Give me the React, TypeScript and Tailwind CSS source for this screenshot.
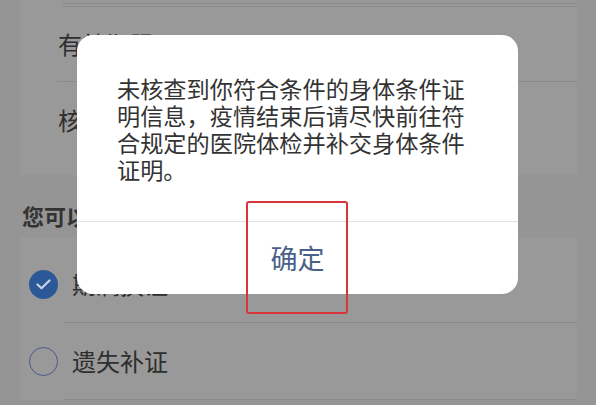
import React from "react";

const font = { fontFamily: '"Noto Sans CJK SC", "Noto Sans", sans-serif' };

function Row({ children, h, pt = 0 }: { children: React.ReactNode; h: string; pt?: number }) {
    return <div className={`flex items-center ${h}`} style={pt ? { paddingTop: pt } : undefined}>{children}</div>;
}

export default function App() {
    return (
        <div className="relative w-[596px] h-[405px] overflow-hidden bg-[#959595]" style={font}>
            {/* top card: licence details */}
            <div className="ml-[20px] mr-[19px] h-[175px] bg-[#999999]">
                <div className="pt-[3px] pl-[43px]">
                    <div className="h-px bg-[#8a8a8a]" />
                    <div className="mt-[2px] h-px bg-[#8c8c8c]" />
                </div>
                <Row h="h-[74px]">
                    <span className="pl-[38px] text-[24px] leading-[28px] text-[#2e2e2e]">有效期限</span>
                </Row>
                <div className="ml-[37px] h-px bg-[#8b8b8b]" />
                <Row h="h-[76px]">
                    <span className="pl-[38px] text-[24px] leading-[28px] text-[#2e2e2e]">核发机关</span>
                </Row>
            </div>

            {/* section header */}
            <div className="h-[62px] pl-[22px] pt-[28px]">
                <span className="block text-[22px] leading-[24px] font-semibold text-[#333333]">您可以办理以下业务</span>
            </div>

            {/* options */}
            <div className="ml-[20px] mr-[19px] bg-[#999999]">
                <div className="flex items-center h-[85px] pt-[9px]">
                    <span className="ml-[9px] flex h-[29px] w-[29px] items-center justify-center rounded-full bg-[#2d5898]">
                        <svg width="15" height="11" viewBox="0 0 15 11" fill="none">
                            <path d="M1.5 5.5 L5.5 9.2 L13.5 1.5" stroke="#c9d3e2" strokeWidth="2.2" strokeLinecap="round" strokeLinejoin="round" />
                        </svg>
                    </span>
                    <span className="ml-[14px] text-[24px] leading-[28px] text-[#2e2e2e]">期满换证</span>
                </div>
                <div className="ml-[43px] h-px bg-[#8b8b8b]" />
                <div className="flex items-center h-[76px]">
                    <span className="ml-[9px] h-[29px] w-[29px] rounded-full border-[1.5px] border-[#4c5a87]" />
                    <span className="ml-[14px] text-[24px] leading-[28px] text-[#2e2e2e]">遗失补证</span>
                </div>
                <div className="ml-[43px] h-px bg-[#8b8b8b]" />
            </div>

            {/* dialog */}
            <div className="absolute left-[77px] top-[35px] w-[441px] h-[259px] rounded-[16px] bg-white flex flex-col">
                <div className="h-[186px] px-[40px] pt-[40px]">
                    <p className="text-[23.2px] leading-[27px] text-[#333333]">
                        未核查到你符合条件的身体条件证明信息，疫情结束后请尽快前往符合规定的医院体检并补交身体条件证明。
                    </p>
                </div>
                <div className="h-px bg-[#e2e2e2]" />
                <div className="flex flex-1 items-center justify-center">
                    <span className="text-[27px] leading-[30px] text-[#4a6189]">确定</span>
                </div>
            </div>

            {/* red annotation box */}
            <div className="absolute left-[246px] top-[201px] w-[102px] h-[113px] rounded-[3px] border-2 border-[#d8343a]" />
        </div>
    );
}
